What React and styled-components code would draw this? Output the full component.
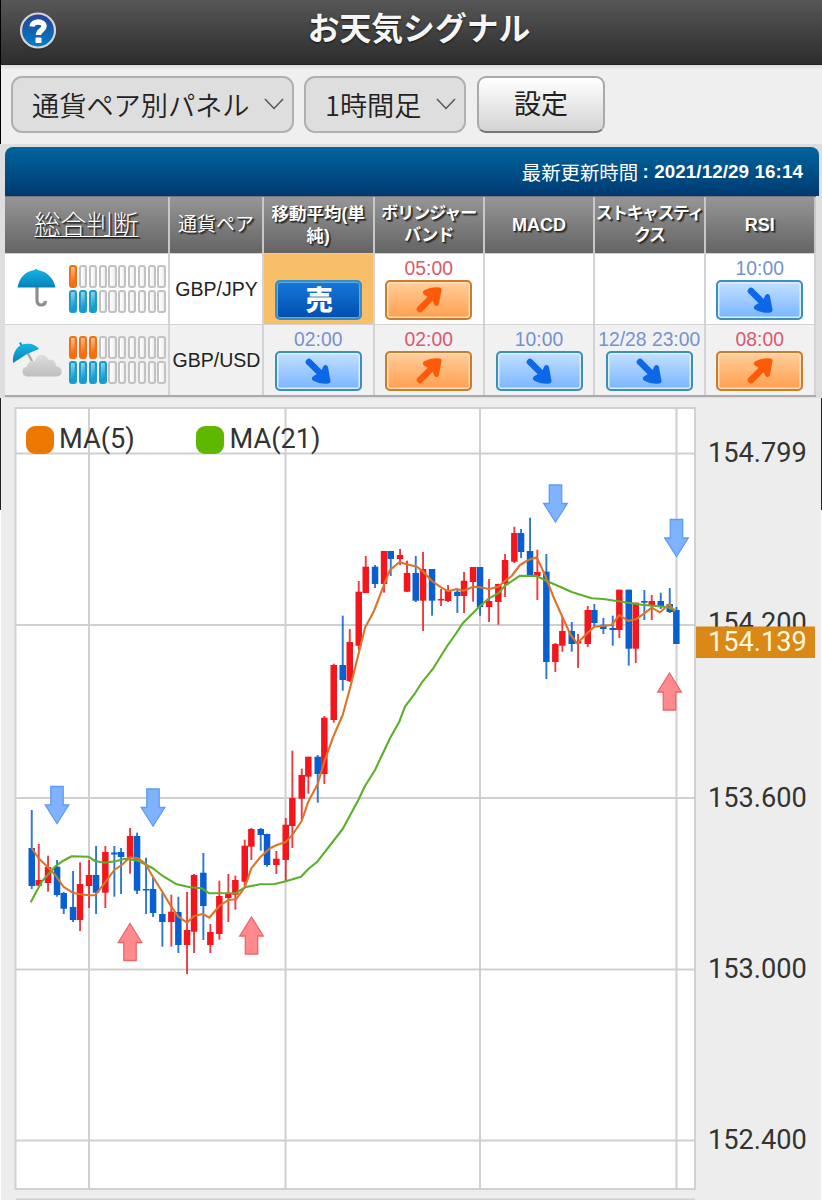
import React from "react";
import styled, { createGlobalStyle } from "styled-components";

const GlobalStyle = createGlobalStyle`
  * {
    box-sizing: border-box;
  }
  body {
    margin: 0;
    background: #eee;
    font-family: "Liberation Sans", "Noto Sans CJK JP", sans-serif;
  }
`;

const Page = styled.div`
  width: 822px;
  height: 1200px;
  overflow: hidden;
  background: #eee;
`;

const TopArea = styled.div`
  border-left: 1px solid #000;
`;

const Header = styled.header`
  height: 65px;
  display: grid;
  grid-template-columns: 60px 1fr 42px;
  align-items: center;
  background: linear-gradient(#575757, #2c2c2c);
  border-bottom: 1px solid #222;
`;

const HelpButton = styled.button`
  width: 38px;
  height: 38px;
  margin: -3px 0 0 18px;
  padding: 0;
  border: none;
  background: none;
`;

const Title = styled.h1`
  margin: -12px 0 0 -3px;
  text-align: center;
  font: bold 31.8px/46px "Noto Sans CJK JP", sans-serif;
  color: #f6f6f6;
  text-shadow: 0 1px 2px #111;
`;

const Toolbar = styled.div`
  height: 79px;
  padding: 11px 10px 0;
  display: flex;
  background: linear-gradient(#ddd, #efefef 5px);
`;

const Select = styled.div`
  width: ${(props) => props.width}px;
  height: 57px;
  margin-right: 10px;
  padding: 0 8px 2px 19px;
  display: flex;
  align-items: center;
  justify-content: space-between;
  border: 2px solid #b0b0b0;
  border-radius: 11px;
  background: #dedede;
  color: #222;
  font: 350 27.2px/50px "Noto Sans CJK JP", sans-serif;
  white-space: nowrap;
`;

const SettingButton = styled.button`
  width: 128px;
  height: 57px;
  margin-left: 1px;
  padding: 0 0 3px;
  border: 2px solid #aaa;
  border-bottom-color: #777;
  border-radius: 9px;
  background: linear-gradient(#fff, #d3d3d3);
  color: #222;
  font: 27px/50px "Noto Sans CJK JP", sans-serif;
`;

const Panel = styled.section`
  height: 254px;
  padding: 3px 3px 0 5px;
  background: #dedede;
`;

const UpdateBar = styled.div`
  height: 49px;
  padding-right: 16px;
  display: flex;
  align-items: center;
  justify-content: flex-end;
  border-radius: 8px 8px 0 0;
  background: linear-gradient(#00659d, #003a72);
  color: #fff;
  font: 400 19.4px/46px "Noto Sans CJK JP", sans-serif;
  white-space: pre;
`;

const DateText = styled.span`
  font: bold 18.8px/48px "Liberation Sans", sans-serif;
  letter-spacing: 0.1px;
`;

const Table = styled.div`
  width: 811px;
  border-bottom: 2px solid #aaa;
`;

const Row = styled.div`
  display: grid;
  grid-template-columns: 165px 94px 110.5px 110.5px 110px 110.5px 110.5px;
`;

const HeadRow = styled(Row)`
  height: 57px;
  border-top: 1px solid #777;
  background: linear-gradient(#969696, #646464);
`;

const HeadCell = styled.div`
  display: flex;
  align-items: center;
  justify-content: center;
  border-right: 2px solid #c8c8c8;
  color: #fff;
  text-align: center;
  white-space: nowrap;
  font-family: "Liberation Sans", "Noto Sans CJK JP", sans-serif;
  font-weight: ${(props) => props.weight || "bold"};
  font-size: ${(props) => props.size}px;
  letter-spacing: ${(props) => props.spacing || 0}px;
  line-height: 22px;
  text-shadow: 1px 1px 1px #222, 2px 2px 1px #444;
  text-decoration: ${(props) => (props.underline ? "underline 1px" : "none")};
  text-underline-offset: 2px;
`;

const DataRow = styled(Row)`
  height: 71px;
  border-top: 1px solid #d0d0d0;
  background: ${(props) => (props.alt ? "#f1f1f1" : "#fff")};
`;

const Cell = styled.div`
  padding-bottom: 4px;
  display: flex;
  flex-direction: column;
  align-items: center;
  justify-content: flex-end;
  border-right: 2px solid #d3d3d3;
  background: ${(props) => (props.active ? "#f9be68" : "transparent")};
`;

const SummaryCell = styled(Cell)`
  flex-direction: row;
  align-items: center;
  justify-content: flex-start;
  padding: 0 0 0 5px;
`;

const PairCell = styled(Cell)`
  justify-content: center;
  padding: 0 0 0 1px;
  font-size: 19.5px;
  color: #222;
`;

const Time = styled.div`
  font-size: 19.3px;
  line-height: 23px;
  white-space: nowrap;
  color: ${(props) => (props.up ? "#d9596e" : "#7492d0")};
`;

const Signal = styled.div`
  width: 87px;
  height: 40px;
  display: flex;
  align-items: center;
  justify-content: center;
  border: 2px solid ${(props) => (props.up ? "#d07a2c" : "#3a8fbd")};
  border-radius: 5px;
  box-shadow: inset 0 0 0 1.5px ${(props) => (props.up ? "#ffe0bd" : "#dcefff")};
  background: ${(props) =>
    props.up
      ? "linear-gradient(#ffce9b, #ff9f4e)"
      : "linear-gradient(#c3e0ff, #7ab5ff)"};
`;

const SellSignal = styled(Signal)`
  padding: 0 0 2px 2px;
  box-shadow: inset 0 0 0 1px #5fa9e8;
  background: linear-gradient(#1777da, #004fae);
  color: #fff;
  font: 900 27px/34px "Noto Sans CJK JP", sans-serif;
`;

const Gauges = styled.div`
  margin-left: 7.3px;
  display: flex;
  flex-direction: column;
  gap: 1.5px;
`;

const Gauge = styled.div`
  display: flex;
  gap: 1.6px;
`;

const Pip = styled.span`
  width: 8.2px;
  height: 23px;
  border: 2px solid ${(props) => (props.color ? props.color : "#c2c2c2")};
  border-radius: 3px;
  background: ${(props) =>
    props.color
      ? `linear-gradient(135deg, rgba(255,255,255,.6), transparent 75%), ${props.color}`
      : "linear-gradient(90deg, #fff, #eee)"};
`;

const ChartArea = styled.section`
  height: 802px;
  background: linear-gradient(#222 112px, #fff 112px) 0 0 / 1px 100% no-repeat,
    linear-gradient(#222 112px, #fff 112px) 100% 0 / 1px 100% no-repeat, #ededed;
  svg {
    display: block;
  }
`;

const ChartText = styled.text`
  font-family: Roboto, sans-serif;
  font-size: 27.2px;
  fill: ${(props) => props.color || "#333"};
`;

// x, high, body top, body bottom, low, rising
const candles = [
  [31.7, 810, 848, 886, 889, 0],
  [38.7, 844, 880, 885.7, 886, 1],
  [48, 855.7, 867, 883, 891.7, 1],
  [57, 860, 866.7, 895, 896.7, 0],
  [63.7, 892, 893, 908.7, 914, 0],
  [73, 871, 907, 920, 922, 0],
  [80, 862.3, 884, 920, 931, 1],
  [89, 860, 875, 886, 908, 1],
  [96, 846, 875, 892.7, 914, 0],
  [105.3, 846, 852, 892.7, 908, 1],
  [114.3, 846, 852.5, 854.5, 896.7, 0],
  [121, 848, 852, 857, 894, 0],
  [130, 828, 836, 857.7, 873.7, 1],
  [137, 832.7, 836, 890.7, 894, 0],
  [146, 857.7, 889, 890.5, 914, 0],
  [153, 877.7, 889, 913, 917, 0],
  [162.3, 893, 914, 922, 946.7, 0],
  [171.3, 894.7, 911.7, 922, 946.7, 1],
  [178.3, 896.7, 912, 945, 953, 0],
  [187, 892, 930, 945, 974, 1],
  [194, 874, 875, 931.7, 953, 1],
  [203.3, 853, 872.7, 906, 940, 0],
  [210.3, 924, 932, 945, 953, 1],
  [219.3, 880.7, 896, 934, 939.7, 1],
  [228.3, 874, 894, 898, 922, 1],
  [235.3, 875.7, 880, 894.7, 909.7, 1],
  [244.7, 839.7, 845.7, 881.7, 886, 1],
  [251.3, 828, 829, 846.7, 860, 1],
  [260.7, 828, 829, 835, 850.7, 0],
  [267, 833.7, 834, 865, 866.7, 0],
  [276.3, 851, 858.7, 865, 874, 1],
  [285.7, 818, 824.7, 860, 881, 1],
  [292.3, 750.7, 798, 826, 848, 1],
  [301.7, 768.7, 775, 798.7, 820, 1],
  [308.3, 756.7, 756.7, 776.7, 793.7, 1],
  [317.7, 755, 756.7, 774, 802.7, 0],
  [324.3, 716, 717.7, 774, 784, 1],
  [333.7, 663.7, 665, 720, 722.7, 1],
  [342.7, 615.7, 665, 680, 690.7, 0],
  [349.7, 629, 642, 681, 682, 1],
  [358.7, 581, 591.7, 645.7, 650, 1],
  [365.7, 556, 566.7, 593, 593, 1],
  [375, 565, 566.7, 584, 588, 0],
  [384, 551, 551, 584, 592.7, 1],
  [390.7, 551, 551, 559, 576, 0],
  [400, 549, 555, 559, 565, 1],
  [407, 560.7, 573, 591.7, 592, 1],
  [415.7, 556, 573, 600.7, 602, 0],
  [423, 552, 569, 600.7, 631, 1],
  [432, 569, 569, 600.7, 615.7, 0],
  [441, 589, 599, 600.5, 606, 1],
  [448, 585, 590, 601, 602, 1],
  [457.3, 590, 591.7, 596, 613, 0],
  [464, 572, 580.7, 596, 613, 1],
  [473, 567, 567, 582, 601.7, 1],
  [480, 567, 567, 607, 615.7, 0],
  [489, 579, 601, 607, 622, 1],
  [498.3, 583.7, 584, 602, 624.7, 1],
  [505, 554, 560, 583.7, 597, 1],
  [514.3, 526.7, 533, 561.7, 563, 1],
  [521, 529, 533, 552, 558, 0],
  [530, 517.7, 551, 575, 575, 0],
  [537.3, 549.7, 572, 576, 600, 1],
  [546.3, 554, 571.7, 662, 679, 0],
  [555.3, 643, 644, 662, 672, 1],
  [562.3, 617, 631, 645.7, 651.7, 1],
  [571.7, 622, 631, 644, 651.7, 0],
  [578, 634, 641, 643.5, 668, 1],
  [587.7, 606, 610, 644, 647, 1],
  [594.3, 604, 610, 623, 627, 0],
  [603.3, 618, 624.7, 629, 634, 0],
  [612.7, 615.7, 628, 630, 645.7, 0],
  [619.3, 589.7, 589.7, 630, 638, 1],
  [628.7, 589.7, 589.7, 648.7, 665.7, 0],
  [635.7, 602.7, 602.7, 648.7, 663, 1],
  [644.3, 590, 601, 602.7, 620, 0],
  [651.7, 595, 601, 606, 620, 1],
  [660.7, 592.7, 601, 606.7, 609, 0],
  [669.7, 588, 604, 612, 613, 0],
  [676.3, 607, 610, 644, 644, 0],
];

const ma5 =
  "31.7,848 38.3,858 46.7,866 56,876 63.3,886.7 72.7,892.7 80,894.3 88.3,895.3 95,895.3 105,882.7 114.3,870 121.7,865 130,857.3 138,858.3 145,863.3 153,877 162.3,891.7 171.3,906.7 178.3,916.7 187,922.7 194,916 202.7,914 209.3,917.7 219.3,906 228.3,900 236,899.3 244.7,887.3 251.3,868.3 260.7,856.7 270,848.3 276.3,845.3 285.7,842 292.3,835 301.7,821 308.3,801.7 317.7,784 324.3,761.7 333.3,736.7 342.7,715 350,688.3 358.7,653.3 365,627.7 374,611 383.3,586.7 390,570 399.3,562.3 407,564.3 416.7,566.7 423.3,571.7 432,581 441,587.3 448.3,591.3 456.7,589 463.3,590.7 473.3,586.7 480,587.3 489,589 498.3,586.7 505,581 511.7,576 520,565 528.3,560 536.7,557.3 545,575 554,598.3 562.3,616.7 570.7,635 577.3,643.3 587.7,632.7 594.3,626.7 601.7,626 611.7,625 619.3,615 628.3,621 635.7,619.3 644.3,613.3 651.7,607.7 660,612.3 669.3,604.3 675,611.7";

const ma21 =
  "30.7,902.3 41.7,881.7 55,866.7 63.3,860.7 71.7,856.3 88.3,856.7 95,861 105,862.7 116.7,861 125,858.7 138.3,860.7 153.3,868.5 162.3,875.7 176.7,884.3 190,887.3 201.7,888.3 209.3,893.3 236,893 244.7,887.3 260,884.3 275,884 286.7,881 301,876.7 308.3,869 316.7,862.3 342.7,829 358.3,800 365,786 375,770 390,738.3 399.3,721.7 405,706.7 415,693.3 421.7,682.7 433.3,668.3 446.7,646.7 455,635 462.7,623.3 473.3,612.7 480,606 489,598.3 498.3,593.3 505,585.7 520,575.7 536.7,576 546.7,581 560,586.7 571.7,592 591.7,598.3 603.3,599 618.3,601.3 641.7,604.7 666.7,607 675,610";

// top centre of each marker
const sellMarks = [[57, 786.5], [153, 789], [555.5, 485], [676.5, 519.5]];
const buyMarks = [[130, 923], [251.5, 916.5], [669.5, 672.5]];

const rows = [
  {
    pair: "GBP/JPY",
    up: 1,
    down: 3,
    signals: [{ sell: true }, { time: "05:00", up: true }, null, null, { time: "10:00" }],
  },
  {
    pair: "GBP/USD",
    up: 3,
    down: 4,
    cloudy: true,
    signals: [
      { time: "02:00" },
      { time: "02:00", up: true },
      { time: "10:00" },
      { time: "12/28 23:00" },
      { time: "08:00", up: true },
    ],
  },
];

const pips = [0, 1, 2, 3, 4, 5, 6, 7, 8, 9];

const HelpIcon = () => (
  <svg width="38" height="38" viewBox="0 0 38 38">
    <defs>
      <linearGradient id="help" x2="0" y2="1">
        <stop offset="0" stopColor="#27439b" />
        <stop offset="0.5" stopColor="#1260ae" />
        <stop offset="1" stopColor="#0082cc" />
      </linearGradient>
    </defs>
    <circle cx="19" cy="20" r="18" fill="#222" opacity=".5" />
    <circle cx="19" cy="18.5" r="17" fill="url(#help)" stroke="#d8d4d0" strokeWidth="2.2" />
    <path d="M13 14.5C13.5 8.5 25.5 8.5 25 14.5C25 18 19.5 18.5 19.5 23" fill="none" stroke="#fff" strokeWidth="5.4" />
    <rect x="16.5" y="25.5" width="6" height="5.5" rx="1" fill="#fff" />
  </svg>
);

const Chevron = () => (
  <svg width="20" height="14" viewBox="0 0 20 14">
    <path d="M1 2L10 11.5L19 2" fill="none" stroke="#555" strokeWidth="1.5" />
  </svg>
);

const ArrowIcon = ({ up }) => (
  <svg width="30" height="30" viewBox="0 0 30 30">
    <g
      transform={up ? "matrix(1 0 0 -1 0 30)" : undefined}
      stroke={up ? "#ff5a0a" : "#0d68e8"}
      fill={up ? "#ff5a0a" : "#0d68e8"}
      strokeLinecap="round"
      strokeLinejoin="round"
    >
      <path d="M6 6L18 18" strokeWidth="6.6" />
      <path d="M22.5 11.5L25 25Q18 26 11.5 22.5L16.5 19.5L20.5 16Z" strokeWidth="5" />
    </g>
  </svg>
);

const Umbrella = () => (
  <svg width="52" height="60" viewBox="0 0 52 60">
    <defs>
      <linearGradient id="canopy" x2="0" y2="1">
        <stop offset="0" stopColor="#15b6e7" />
        <stop offset="1" stopColor="#0582b8" />
      </linearGradient>
    </defs>
    <path d="M27 27V41Q27 46 31.5 46Q35 46 35.5 42" fill="none" stroke="#8e8e8e" strokeWidth="3.2" />
    <path d="M26 9.5L27.5 11C36 12 43.5 18.5 45.5 28.5H7.5C9 18.5 16 12 24.5 11Z" fill="url(#canopy)" />
  </svg>
);

const UmbrellaCloud = () => (
  <svg width="52" height="60" viewBox="0 0 52 60">
    <defs>
      <linearGradient id="cloud" x2="0" y2="1">
        <stop offset="0" stopColor="#dfdfdf" />
        <stop offset="1" stopColor="#bdbdbd" />
      </linearGradient>
    </defs>
    <path d="M17 22L22 31" stroke="#aaa" strokeWidth="2.5" />
    <path d="M3 33C2 22 8 14 16 14C21 13 26 15 29 19L17 24Z" fill="url(#canopy)" />
    <path d="M10 12.5L11.5 15.5" stroke="#0a94c4" strokeWidth="2" />
    <path d="M18 46.5C11 46.5 10.5 37.5 17 36.5C18 31 23 31 25 31C26 23.5 35 22 39 30C43 29 46 32 46 36C53 36.5 54 46.5 46.5 46.5Z" fill="url(#cloud)" />
  </svg>
);

const PriceChart = () => (
  <svg width="822" height="802" viewBox="0 398 822 802">
    <rect x="15.5" y="408" width="679.5" height="781" fill="#fff" stroke="#d1d1d1" strokeWidth="2" />
    <path
      d="M89 408V1189M285.5 408V1189M480 408V1189M676.5 408V1189M16 453.5H695M16 625H695M16 798H695M16 969.5H695M16 1140.5H695M16 1199.5H695"
      stroke="#d0d0d0"
      strokeWidth="2"
    />
    {candles.map(([x, high, top, bottom, low, rising]) => (
      <g key={x} fill={rising ? "#f3161d" : "#085fcf"}>
        <rect x={x - 0.9} y={high} width="1.9" height={low - high} opacity=".85" />
        <rect x={x - 3.2} y={top} width="6.5" height={bottom - top} />
      </g>
    ))}
    <polyline points={ma21} fill="none" stroke="#5baf2c" strokeWidth="2.1" strokeLinejoin="round" />
    <polyline points={ma5} fill="none" stroke="#da752a" strokeWidth="2.1" strokeLinejoin="round" />
    {sellMarks.map(([x, y]) => (
      <path
        key={x}
        transform={`translate(${x} ${y})`}
        d="M-6.2 0H6.2V18.5H11.8L0 37L-11.8 18.5H-6.2Z"
        fill="#7fb2ff"
        stroke="#5e9cf2"
        strokeWidth="1.3"
      />
    ))}
    {buyMarks.map(([x, y]) => (
      <path
        key={x}
        transform={`translate(${x} ${y})`}
        d="M0 0.5L11.8 19.5H6.2V37.5H-6.2V19.5H-11.8Z"
        fill="#ff8a8e"
        stroke="#ed666b"
        strokeWidth="1.3"
      />
    ))}
    <rect x="26" y="426" width="28" height="28" rx="9" fill="#eb7800" />
    <rect x="196" y="426" width="28" height="28" rx="9" fill="#5fb800" />
    <ChartText x="59" y="448">MA(5)</ChartText>
    <ChartText x="229.5" y="448">MA(21)</ChartText>
    <ChartText x="708" y="461.5">154.799</ChartText>
    <ChartText x="708" y="632">154.200</ChartText>
    <ChartText x="708" y="806.5">153.600</ChartText>
    <ChartText x="708" y="978">153.000</ChartText>
    <ChartText x="708" y="1149">152.400</ChartText>
    <rect x="696" y="626.5" width="119" height="31.5" fill="#da8817" />
    <ChartText x="708" y="650.5" color="#fff8dc">154.139</ChartText>
  </svg>
);

const SignalCell = ({ signal }) => {
  if (!signal) return <Cell />;
  if (signal.sell) {
    return (
      <Cell active>
        <SellSignal>売</SellSignal>
      </Cell>
    );
  }
  return (
    <Cell>
      <Time up={signal.up}>{signal.time}</Time>
      <Signal up={signal.up}>
        <ArrowIcon up={signal.up} />
      </Signal>
    </Cell>
  );
};

function App() {
  return (
    <Page>
      <GlobalStyle />
      <TopArea>
        <Header>
          <HelpButton>
            <HelpIcon />
          </HelpButton>
          <Title>お天気シグナル</Title>
        </Header>
        <Toolbar>
          <Select width={283}>
            通貨ペア別パネル
            <Chevron />
          </Select>
          <Select width={162}>
            1時間足
            <Chevron />
          </Select>
          <SettingButton>設定</SettingButton>
        </Toolbar>
      </TopArea>
      <Panel>
        <UpdateBar>
          最新更新時間 <DateText>: 2021/12/29 16:14</DateText>
        </UpdateBar>
        <Table>
          <HeadRow>
            <HeadCell size={26} weight={300} underline>総合判断</HeadCell>
            <HeadCell size={19} weight={400}>通貨ペア</HeadCell>
            <HeadCell size={17.5}>移動平均(単<br />純)</HeadCell>
            <HeadCell size={17} spacing={-1}>ボリンジャー<br />バンド</HeadCell>
            <HeadCell size={18}>MACD</HeadCell>
            <HeadCell size={17} spacing={-1.6}>ストキャスティ<br />クス</HeadCell>
            <HeadCell size={18}>RSI</HeadCell>
          </HeadRow>
          {rows.map((row) => (
            <DataRow key={row.pair} alt={row.cloudy}>
              <SummaryCell>
                {row.cloudy ? <UmbrellaCloud /> : <Umbrella />}
                <Gauges>
                  <Gauge>
                    {pips.map((n) => (
                      <Pip key={n} color={n < row.up ? "#f36f10" : undefined} />
                    ))}
                  </Gauge>
                  <Gauge>
                    {pips.map((n) => (
                      <Pip key={n} color={n < row.down ? "#179dd0" : undefined} />
                    ))}
                  </Gauge>
                </Gauges>
              </SummaryCell>
              <PairCell>{row.pair}</PairCell>
              {row.signals.map((signal, i) => (
                <SignalCell key={i} signal={signal} />
              ))}
            </DataRow>
          ))}
        </Table>
      </Panel>
      <ChartArea>
        <PriceChart />
      </ChartArea>
    </Page>
  );
}

export default App;
